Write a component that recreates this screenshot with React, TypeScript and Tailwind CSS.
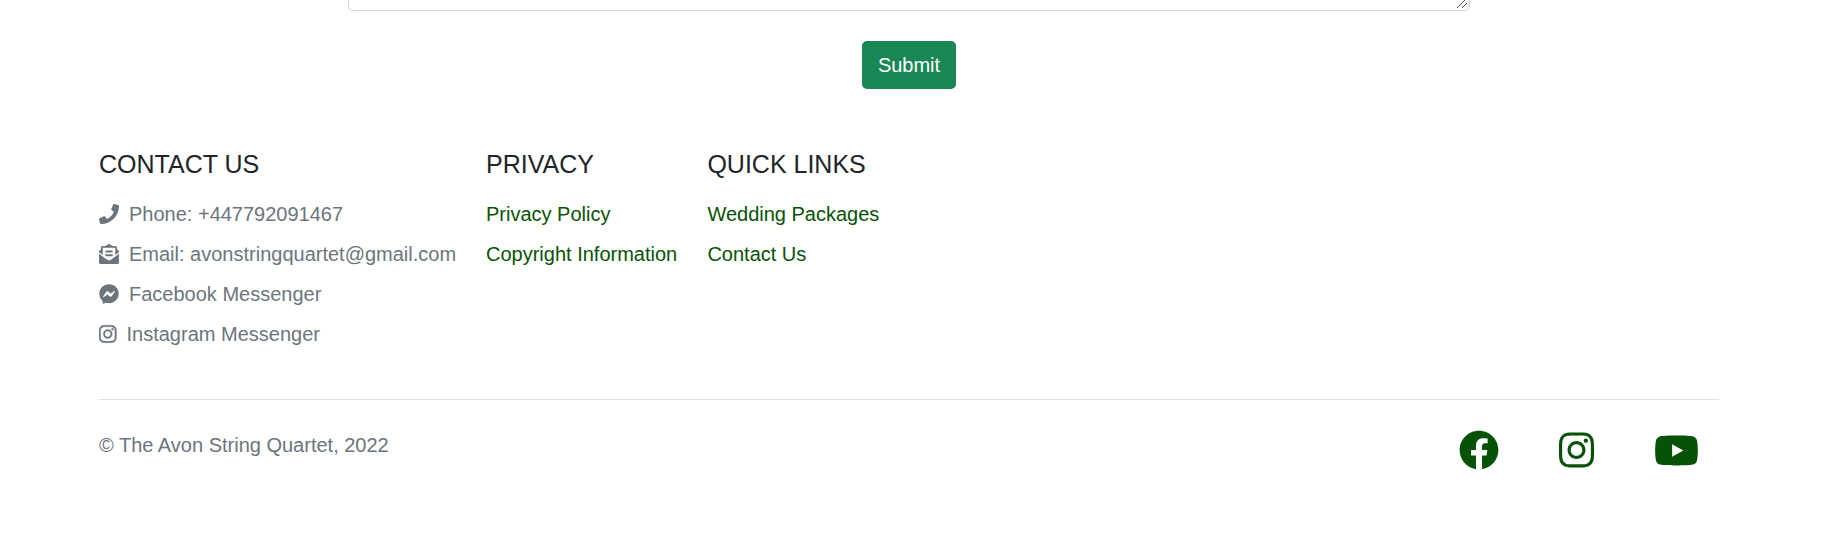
import React from "react";
import {
  FaPhone,
  FaEnvelopeOpenText,
  FaFacebookMessenger,
  FaInstagram,
  FaFacebook,
  FaYoutube,
} from "react-icons/fa";

type Column = { title: string; links: string[] };

const columns: Column[] = [
  { title: "PRIVACY", links: ["Privacy Policy", "Copyright Information"] },
  { title: "QUICK LINKS", links: ["Wedding Packages", "Contact Us"] },
];

const contacts = [
  { icon: <FaPhone className="h-5 w-5" />, text: "Phone: +447792091467" },
  { icon: <FaEnvelopeOpenText className="h-5 w-5" />, text: "Email: avonstringquartet@gmail.com" },
  { icon: <FaFacebookMessenger className="h-5 w-5" />, text: "Facebook Messenger" },
  { icon: <FaInstagram className="h-5 w-[17.5px]" strokeWidth="8" />, text: "Instagram Messenger" },
];

function Heading({ children }: { children: React.ReactNode }) {
  return <h5 className="mb-5 text-[25px] leading-[30px] text-[#212529]">{children}</h5>;
}

export default function App() {
  return (
    <div className="h-[536px] overflow-hidden bg-white font-['Liberation_Sans',Arial,sans-serif] text-xl leading-[30px]">
      <div className="ml-[348px] flex h-[11px] w-[1122px] items-end justify-end rounded-b-[5px] border border-t-0 border-[#ced4da] pr-[2px] pb-[2px]">
        <svg
          className="h-[8px] w-[10px]"
          viewBox="0 0 10 8"
          fill="none"
          stroke="#555"
          strokeWidth="1"
          shapeRendering="crispEdges"
        >
          <path d="M0 8L8 0M5 8L10 3" />
        </svg>
      </div>

      <div className="mt-[30px] ml-[862px]">
        <button className="h-12 w-[94px] rounded-[5px] bg-[#198754] text-center text-white">Submit</button>
      </div>

      <footer className="ml-[99px] w-[1620px]">
        <div className="mt-[60px] flex">
          <section className="w-[387px]">
            <Heading>CONTACT US</Heading>
            <ul className="space-y-2.5 text-[#6c757d]">
              {contacts.map((c) => (
                <li key={c.text} className="flex items-center gap-2.5 whitespace-nowrap">
                  {c.icon}
                  <span>{c.text}</span>
                </li>
              ))}
            </ul>
          </section>
          {columns.map((col) => (
            <section key={col.title} className="w-[221.4px]">
              <Heading>{col.title}</Heading>
              <ul className="space-y-2.5 text-[#075207]">
                {col.links.map((l) => (
                  <li key={l} className="whitespace-nowrap">
                    <a href="#">{l}</a>
                  </li>
                ))}
              </ul>
            </section>
          ))}
        </div>

        <div className="mt-[50px] flex items-start justify-between border-t border-[#dee2e6] pt-[30px]">
          <p className="text-[#6c757d]">© The Avon String Quartet, 2022</p>
          <div className="flex h-10 items-center pr-5 text-[#075207]">
            <FaFacebook className="mr-[60px] h-10 w-10" />
            <FaInstagram className="mr-[60px] h-10 w-[35px]" />
            <FaYoutube className="h-[45px] w-[45px]" />
          </div>
        </div>
      </footer>
    </div>
  );
}
